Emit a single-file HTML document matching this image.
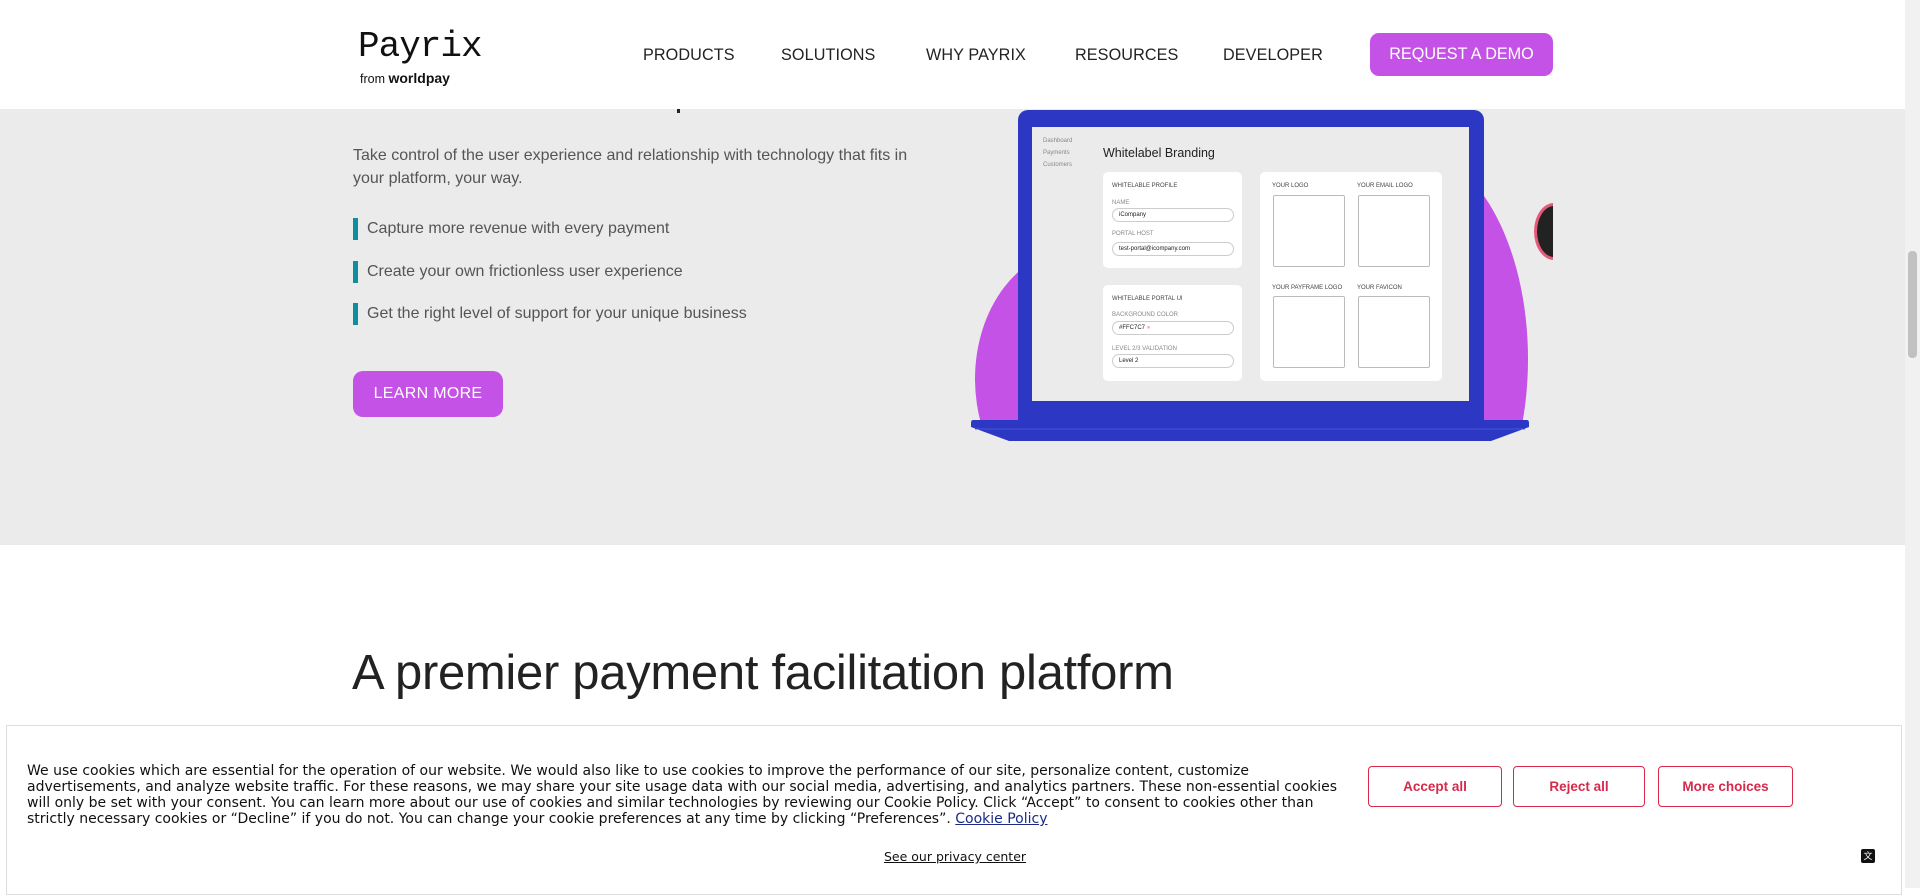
<!DOCTYPE html>
<html><head><meta charset="utf-8"><style>
*{margin:0;padding:0;box-sizing:border-box}
body{width:1920px;height:888px;overflow:hidden;background:#fff;font-family:"Liberation Sans",Arial,sans-serif;position:relative}
.abs{position:absolute}
.nav{font-size:16.2px;color:#222;top:46px;letter-spacing:.1px}
.gray{left:0;top:109px;width:1905px;height:436px;background:#ebebeb}
.bul{left:353px;width:5px;height:22px;background:#0e8fa0}
.bt{left:367px;font-size:16px;color:#555}
.lap div{position:absolute}
.sm{font-size:6px;color:#444;font-family:"Liberation Sans",sans-serif;white-space:nowrap}
.inp{border:1px solid #ccc;border-radius:8px;background:#fff;height:14px;font-size:6px;padding-left:6px;line-height:12px;color:#222}
.box{border:1px solid #bbb;border-radius:2px;background:#fff}
.cb{position:absolute;top:766px;height:41px;border:1px solid #d6294b;border-radius:4px;color:#d6294b;font-weight:bold;font-size:13.5px;text-align:center;line-height:39px;background:#fff}
</style></head><body>
<div class="abs" style="left:0;top:0;width:1905px;height:109px;background:#fff"></div>
<div class="abs" style="left:358px;top:26px;font-family:'Liberation Mono',monospace;font-size:36px;color:#111;letter-spacing:-1px">Payrix</div>
<div class="abs" style="left:360px;top:70px;font-size:12.5px;color:#111">from <b style="font-size:14px">worldpay</b></div>
<div class="abs nav" style="left:643px">PRODUCTS</div>
<div class="abs nav" style="left:781px">SOLUTIONS</div>
<div class="abs nav" style="left:926px">WHY PAYRIX</div>
<div class="abs nav" style="left:1075px">RESOURCES</div>
<div class="abs nav" style="left:1223px">DEVELOPER</div>
<div class="abs" style="left:1370px;top:33px;width:183px;height:43px;background:#c452e6;border-radius:9px;color:#fff;font-size:16.2px;text-align:center;line-height:43px">REQUEST A DEMO</div>
<div class="abs gray"></div>
<div class="abs" style="left:677px;top:109px;width:3px;height:4px;background:#222"></div>
<div class="abs" style="left:353px;top:144px;font-size:16px;color:#555;line-height:23px;width:580px">Take control of the user experience and relationship with technology that fits in your platform, your way.</div>
<div class="abs bul" style="top:218px"></div><div class="abs bt" style="top:220px">Capture more revenue with every payment</div>
<div class="abs bul" style="top:261px"></div><div class="abs bt" style="top:263px">Create your own frictionless user experience</div>
<div class="abs bul" style="top:303px"></div><div class="abs bt" style="top:305px">Get the right level of support for your unique business</div>
<div class="abs" style="left:353px;top:371px;width:150px;height:46px;background:#c452e6;border-radius:10px;color:#fff;font-size:16px;text-align:center;line-height:46px;letter-spacing:.3px">LEARN MORE</div>
<div class="lap">
<div style="left:960px;top:109px;width:600px;height:312px;overflow:hidden">
<div style="position:absolute;left:15px;top:140px;width:200px;height:260px;background:#c452e6;border-radius:50%"></div>
<div style="position:absolute;left:330px;top:40px;width:238px;height:420px;background:#c452e6;border-radius:50%"></div>
<div style="position:absolute;left:574px;top:94px;width:40px;height:57px;background:#222;border:3px solid #e45a7a;border-radius:50%"></div>
<div style="position:absolute;left:593px;top:80px;width:30px;height:80px;background:#ebebeb"></div>
</div>
<div style="left:1018px;top:110px;width:466px;height:315px;background:#2c38c4;border-radius:10px 10px 0 0"></div>
<div style="left:1032px;top:127px;width:437px;height:274px;background:#ebebeb"></div>
<svg style="position:absolute;left:971px;top:420px" width="558" height="22"><path d="M2 0H556Q558 0 558 3V7L520 21H38L0 7V3Q0 0 2 0Z" fill="#2c38c4"/><line x1="4" y1="9" x2="554" y2="9" stroke="#4a55d8" stroke-width="1"/></svg>
<div class="sm" style="left:1043px;top:138px;color:#888">Dashboard</div>
<div class="sm" style="left:1043px;top:150px;color:#888">Payments</div>
<div class="sm" style="left:1043px;top:162px;color:#888">Customers</div>
<div style="left:1103px;top:146px;font-size:12.5px;color:#222">Whitelabel Branding</div>
<div style="left:1103px;top:172px;width:139px;height:96px;background:#fff;border-radius:5px"></div>
<div style="left:1103px;top:285px;width:139px;height:96px;background:#fff;border-radius:5px"></div>
<div style="left:1260px;top:172px;width:182px;height:209px;background:#fff;border-radius:5px"></div>
<div class="sm" style="left:1112px;top:183px">WHITELABLE PROFILE</div>
<div class="sm" style="left:1112px;top:200px;color:#888">NAME</div>
<div class="inp sm" style="left:1112px;top:208px;width:122px">iCompany</div>
<div class="sm" style="left:1112px;top:231px;color:#888">PORTAL HOST</div>
<div class="inp sm" style="left:1112px;top:242px;width:122px">test-portal@icompany.com</div>
<div class="sm" style="left:1112px;top:296px">WHITELABLE PORTAL UI</div>
<div class="sm" style="left:1112px;top:312px;color:#888">BACKGROUND COLOR</div>
<div class="inp sm" style="left:1112px;top:321px;width:122px">#FFC7C7 <span style="color:#f6a8b6">●</span></div>
<div class="sm" style="left:1112px;top:346px;color:#888">LEVEL 2/3 VALIDATION</div>
<div class="inp sm" style="left:1112px;top:354px;width:122px">Level 2</div>
<div class="sm" style="left:1272px;top:183px">YOUR LOGO</div>
<div class="sm" style="left:1357px;top:183px">YOUR EMAIL LOGO</div>
<div class="box" style="left:1273px;top:195px;width:72px;height:72px"></div>
<div class="box" style="left:1358px;top:195px;width:72px;height:72px"></div>
<div class="sm" style="left:1272px;top:285px">YOUR PAYFRAME LOGO</div>
<div class="sm" style="left:1357px;top:285px">YOUR FAVICON</div>
<div class="box" style="left:1273px;top:296px;width:72px;height:72px"></div>
<div class="box" style="left:1358px;top:296px;width:72px;height:72px"></div>
</div>
<div class="abs" style="left:352px;top:645px;font-size:49px;color:#222;letter-spacing:-.3px">A premier payment facilitation platform</div>
<div class="abs" style="left:1905px;top:0;width:15px;height:888px;background:#f1f1f1"></div>
<div class="abs" style="left:1908px;top:251px;width:9px;height:107px;background:#c1c1c1;border-radius:4px"></div>
<div class="abs" style="left:6px;top:725px;width:1896px;height:170px;background:#fff;border:1px solid #ddd"></div>
<div class="abs" style="left:27px;top:763px;font-family:'DejaVu Sans',sans-serif;font-size:14px;line-height:16px;color:#111;white-space:nowrap">We use cookies which are essential for the operation of our website. We would also like to use cookies to improve the performance of our site, personalize content, customize<br>advertisements, and analyze website traffic. For these reasons, we may share your site usage data with our social media, advertising, and analytics partners. These non-essential cookies<br>will only be set with your consent. You can learn more about our use of cookies and similar technologies by reviewing our Cookie Policy. Click “Accept” to consent to cookies other than<br>strictly necessary cookies or “Decline” if you do not. You can change your cookie preferences at any time by clicking “Preferences”. <u style="color:#1a2a8a">Cookie Policy</u></div>
<div class="cb" style="left:1368px;width:134px">Accept all</div>
<div class="cb" style="left:1513px;width:132px">Reject all</div>
<div class="cb" style="left:1658px;width:135px">More choices</div>
<div class="abs" style="left:884px;top:849px;font-family:'DejaVu Sans',sans-serif;font-size:12.5px;color:#111;text-decoration:underline">See our privacy center</div>
<div class="abs" style="left:1861px;top:849px;width:14px;height:14px;background:#111;border-radius:2px;color:#fff;font-size:9px;line-height:14px;text-align:center">文</div>
</body></html>
